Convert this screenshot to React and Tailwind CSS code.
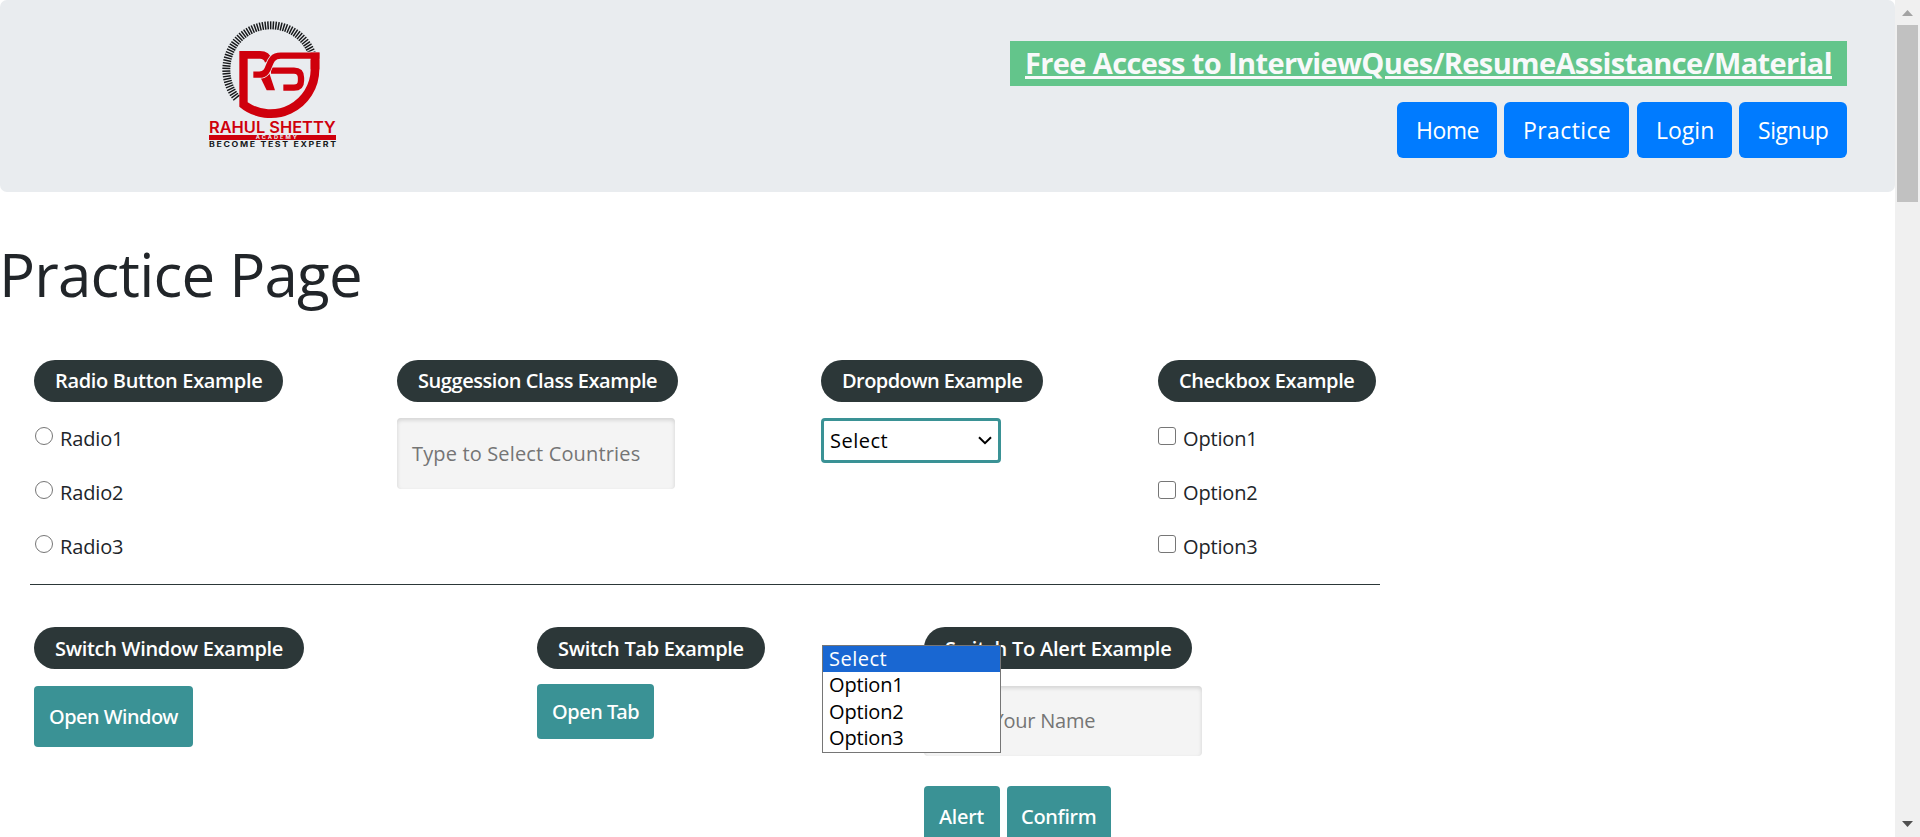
const TICKS = Array.from({ length: 59 }, (_, i) => -22 - i * 3.4);

function Logo() {
  return (
    <svg className="block h-[150px] w-[170px]" viewBox="0 0 510 450" role="img" aria-label="Rahul Shetty Academy">
      <g stroke="#16181a" strokeWidth="4.4">
        {TICKS.map((a) => {
          const c = Math.cos((a * Math.PI) / 180);
          const s = Math.sin((a * Math.PI) / 180);
          return <line key={a} x1={242 + 121 * c} y1={179 + 121 * s} x2={242 + 145 * c} y2={179 + 145 * s} />;
        })}
      </g>
      <g fill="none" stroke="#cf000c">
        <path d="M148 123 V290 A146 146 0 0 0 388 178 V127 H362 V178 A121 121 0 0 1 173 277 V123 Z" fill="#cf000c" stroke="none" />
        <path d="M160 134.500 H210 C224 134.500 232 140 236 154" strokeWidth="23" />
        <path d="M211 202 L238 190 L255 241 H230 Z" fill="#cf000c" stroke="none" />
        <path d="M243 182 H312 Q333 182 333 203 V212 Q333 233 312 233 H280" strokeWidth="19" />
        <path d="M190 194 H208 C248 194 226 137 272 137 H388" stroke="#e9ecef" strokeWidth="24" />
        <path d="M190 194 H208 C248 194 226 137 272 137 H388" strokeWidth="19" />
        <path d="M362 128 H388 V178 H362 Z" fill="#cf000c" stroke="none" />
      </g>
      <rect x="57" y="375" width="381" height="15" fill="#cf000c" />
      <g fontFamily="Inter, sans-serif">
        <text x="57" y="368" fontSize="46" fontWeight="600" fill="#cf000c" textLength="380" lengthAdjust="spacingAndGlyphs">RAHUL SHETTY</text>
        <text x="197" y="388" fontSize="14" fontWeight="700" fill="#e9ecef" letterSpacing="5" textLength="130" lengthAdjust="spacingAndGlyphs">ACADEMY</text>
        <text x="57" y="411" fontSize="21" fontWeight="700" fill="#16181a" letterSpacing="4" textLength="386" lengthAdjust="spacingAndGlyphs">BECOME TEST EXPERT</text>
      </g>
    </svg>
  );
}

function NavButton({ className, children }) {
  return (
    <a href="#" className={`h-14 shrink-0 rounded-[6px] bg-[#007bff] text-[23px] leading-[57px] text-white ${className}`}>
      {children}
    </a>
  );
}

function Legend({ className, children }) {
  return (
    <legend className={`h-[42px] rounded-full bg-[#2c3738] pl-[21px] text-[20px] font-semibold whitespace-nowrap text-white ${className}`}>
      {children}
    </legend>
  );
}

function Choice({ round, children }) {
  return (
    <label className="flex h-[54px] items-start text-[20px] leading-[42px] tracking-[-0.15px]">
      <span className={`mt-[9px] mr-[7px] size-[18px] border border-[#767676] bg-white ${round ? "ml-px rounded-full" : "rounded-[3px]"}`} />
      {children}
    </label>
  );
}

function Field({ className, children }) {
  return (
    <div className={`w-[278px] rounded-[4px] bg-[#f4f4f4] pl-[15px] text-[20px] text-[#757575] shadow-[inset_0_2px_4px_rgba(0,0,0,0.14)] ${className}`}>
      {children}
    </div>
  );
}

function Button({ className, children }) {
  return (
    <button className={`block rounded-[4px] bg-[#3a9295] text-left font-['Noto_Sans',sans-serif] text-[20px] font-medium whitespace-nowrap text-white ${className}`}>
      {children}
    </button>
  );
}

function Header() {
  return (
    <header className="flex h-[192px] items-start justify-between rounded-[7px] bg-[#e9ecef] pt-[10px] pr-12 pl-[190px]">
      <Logo />
      <div className="mt-[31px] flex flex-col items-end">
        <a href="#" className="h-[45px] w-[837px] bg-[#63c58b] pl-[15px] text-[29px] leading-[44px] font-bold tracking-[-0.62px] whitespace-nowrap text-[#f8f9fa] underline decoration-[3px] underline-offset-[2px]">
          Free Access to InterviewQues/ResumeAssistance/Material
        </a>
        <nav className="mt-4 flex">
          <NavButton className="mr-[7px] w-[100px] pl-[19px] tracking-[-0.5px]">Home</NavButton>
          <NavButton className="mr-2 w-[125px] pl-[19px] tracking-[0.4px]">Practice</NavButton>
          <NavButton className="mr-[7px] w-[95px] pl-[19px]">Login</NavButton>
          <NavButton className="w-[108px] pl-[19px] tracking-[-0.45px]">Signup</NavButton>
        </nav>
      </div>
    </header>
  );
}

function Menu() {
  return (
    <ul className="absolute top-[243px] left-[1px] z-10 flex h-[108px] w-[179px] flex-col border border-[#767676] bg-white text-[20px] leading-[25px] tracking-[-0.15px] text-black">
      <li className="h-[26px] bg-[#1967d2] pl-[6px] leading-[26px] tracking-[0.5px] text-white">Select</li>
      <li className="h-[26.5px] pl-[6px]">Option1</li>
      <li className="h-[26.5px] pl-[6px]">Option2</li>
      <li className="h-[26.5px] pl-[6px]">Option3</li>
    </ul>
  );
}

function ScrollBar() {
  return (
    <div className="flex h-full w-[25px] shrink-0 flex-col items-center justify-between bg-[#f0f0f0]">
      <div className="flex flex-col items-center">
        <svg className="mt-[10px] mb-[9px] block h-[6px] w-[11px]" viewBox="0 0 11 6"><path d="M5.5 0 11 6H0Z" fill="#a3a3a3" /></svg>
        <div className="mr-px h-[177px] w-[21px] bg-[#c1c1c1]" />
      </div>
      <svg className="mb-[10px] block h-[6px] w-[11px]" viewBox="0 0 11 6"><path d="M0 0H11L5.5 6Z" fill="#505050" /></svg>
    </div>
  );
}

export default function App() {
  return (
    <div className="flex h-[837px] w-[1920px] overflow-hidden bg-white font-['Open_Sans',sans-serif] text-[#212529]">
      <main className="w-[1895px] shrink-0">
        <Header />
        <h1 className="mt-[46px] mb-[50px] text-[60px] leading-[72px] tracking-[-0.78px]">
          <span className="-ml-[1px]">Practice Page</span>
        </h1>

        <section className="ml-[30px] flex h-[225px] w-[1350px] border-b border-[#2c3738] pl-1">
          <fieldset className="w-[363px]">
            <Legend className="w-[249px] leading-[41px] tracking-[-0.33px]">Radio Button Example</Legend>
            <div className="mt-4">
              <Choice round>Radio1</Choice>
              <Choice round>Radio2</Choice>
              <Choice round>Radio3</Choice>
            </div>
          </fieldset>
          <fieldset className="w-[424px]">
            <Legend className="w-[281px] leading-[41px] tracking-[-0.43px]">Suggession Class Example</Legend>
            <Field className="mt-4 h-[71px] leading-[71px] tracking-[0.15px]">Type to Select Countries</Field>
          </fieldset>
          <fieldset className="relative w-[337px]">
            <Legend className="w-[222px] leading-[41px] tracking-[-0.57px]">Dropdown Example</Legend>
            <div className="mt-4 flex h-[45px] w-[180px] items-center justify-between rounded-[4px] border-[3px] border-[#3a9295] bg-white pr-[6px] pl-[6px] text-[20px] leading-[39px] tracking-[0.5px] text-black">
              Select
              <svg className="block h-[9px] w-[14px]" viewBox="0 0 14 9" fill="none" stroke="#000" strokeWidth="2"><path d="M1 1.2 7 7.2 13 1.2" /></svg>
            </div>
            <Menu />
          </fieldset>
          <fieldset>
            <Legend className="w-[218px] leading-[41px] tracking-[-0.38px]">Checkbox Example</Legend>
            <div className="mt-4">
              <Choice>Option1</Choice>
              <Choice>Option2</Choice>
              <Choice>Option3</Choice>
            </div>
          </fieldset>
        </section>

        <section className="mt-[42px] ml-[34px] flex">
          <fieldset className="w-[503px]">
            <Legend className="w-[270px] leading-[43px] tracking-[-0.3px]">Switch Window Example</Legend>
            <Button className="mt-[17px] h-[61px] w-[159px] pl-[15px] leading-[61px] tracking-[-0.5px]">Open Window</Button>
          </fieldset>
          <fieldset className="w-[387px]">
            <Legend className="w-[228px] leading-[43px] tracking-[-0.32px]">Switch Tab Example</Legend>
            <Button className="mt-[15px] h-[55px] w-[117px] pl-[15px] leading-[55px] tracking-[-0.45px]">Open Tab</Button>
          </fieldset>
          <fieldset>
            <Legend className="w-[268px] leading-[43px] tracking-[-0.23px]">Switch To Alert Example</Legend>
            <Field className="mt-[17px] h-[70px] leading-[70px] tracking-[-0.25px]">Enter Your Name</Field>
            <div className="mt-[30px] flex gap-[7px]">
              <Button className="h-[61px] w-[76px] pl-[15px] leading-[61px] tracking-[-0.25px]">Alert</Button>
              <Button className="h-[61px] w-[104px] pl-[14px] leading-[61px] tracking-[-0.28px]">Confirm</Button>
            </div>
          </fieldset>
        </section>
      </main>
      <ScrollBar />
    </div>
  );
}
